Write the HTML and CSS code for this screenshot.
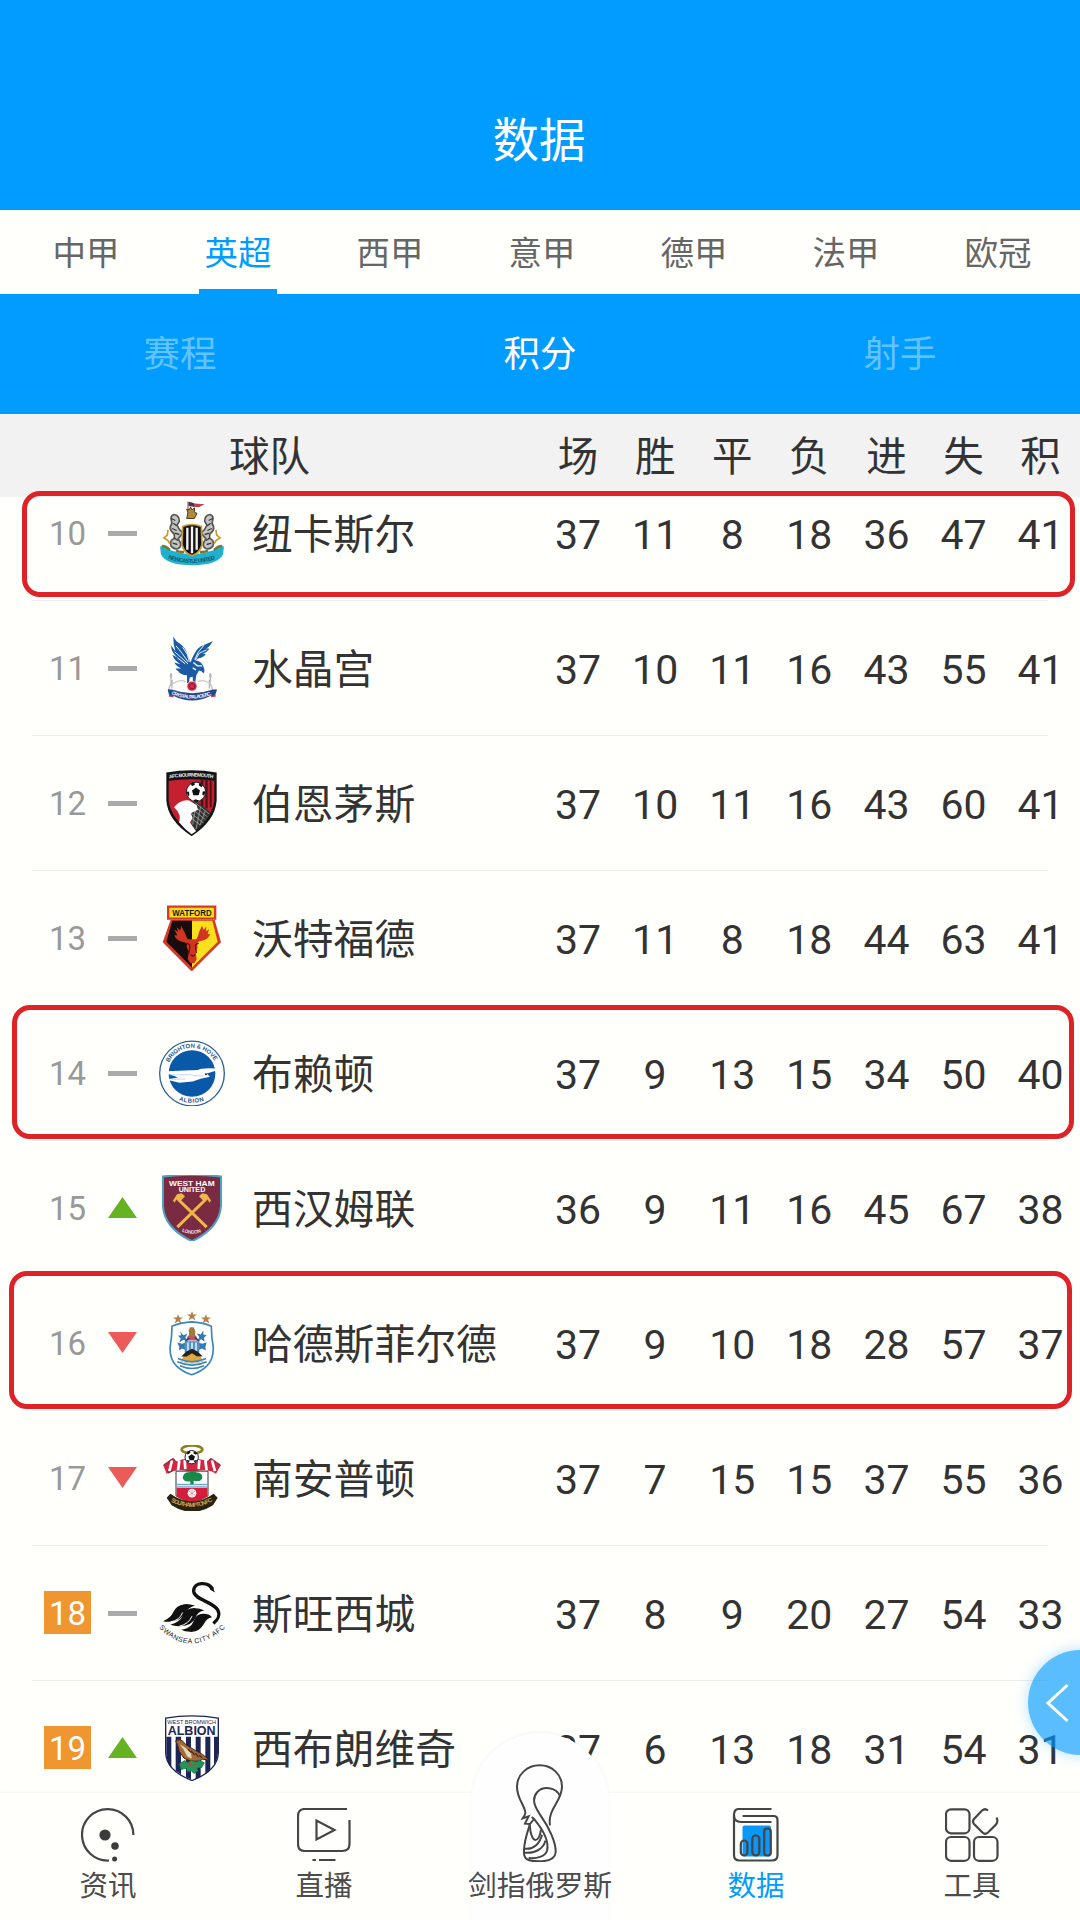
FILE: index.html
```html
<!DOCTYPE html>
<html lang="zh-CN">
<head>
  <meta charset="UTF-8" />
  <meta name="viewport" content="width=device-width, initial-scale=1.0"/>
  <title>数据</title>
  <link rel="stylesheet" href="styles.css">
</head>
<body>
  <!-- club crests -->
  <svg class="defs" width="0" height="0">
    <symbol id="newcastle" viewBox="57 28.5 198 198">
      <path d="M144 34v34" stroke="#555" stroke-width="3"/>
      <path d="M146 34l18 5 30 2-18 9-30-3z" fill="#b5434d"/>
      <path d="M146 34l16 4v10l-16-2z" fill="#3d3a56"/>
      <path d="M140 84l4-18-4-10 8 2 4-8 4 8 8-6-1 12 8 5-8 15z" fill="#b08a3c" stroke="#4a3a22" stroke-width="3"/>
      <path d="M118 92q0-18-16-20-12 4-8 18 4 8-2 16-4 12 6 20 8 6 4 18-14 6-9 22 8 12 22 8 10-6 6-18-4-6-6-12l14-16-10-10-8-14z" fill="#c4c4c4" stroke="#55554f" stroke-width="5"/>
      <path d="M194 92q0-18 16-20 12 4 8 18-4 8 2 16 4 12-6 20-8 6-4 18 14 6 9 22-8 12-22 8-10-6-6-18 4-6 6-12l-14-16 10-10 8-14z" fill="#c4c4c4" stroke="#55554f" stroke-width="5"/>
      <path d="M94 84l12 6M100 98l10 8M96 114l14 6M104 128l14 4M102 142l12 8M98 158l14 4M218 84l-12 6M212 98l-10 8M216 114l-14 6M208 128l-14 4M210 142l-12 8M214 158l-14 4" stroke="#3a3a3a" stroke-width="4"/>
      <path d="M84 118l-2 16-10 8 12 8 6 10M228 118l2 16 10 8-12 8-6 10" fill="none" stroke="#c9962b" stroke-width="5"/>
      <path d="M60 168q12-4 24 8 34 14 72 14t72-14q12-12 24-8l-3 24q-16 32-93 32t-93-32z" fill="#1fb0cd"/>
      <path d="M66 166q12 0 24 12M246 166q-12 0-24 12M108 180q12 6 24 4M204 180q-12 6-24 4" stroke="#7d7428" stroke-width="7" fill="none"/>
      <path d="M128 108q28-12 56 0l2 54q-6 26-30 34-24-8-30-34z" fill="#111" stroke="#c79a35" stroke-width="5"/>
      <path d="M142 112v66M156 108v80M170 112v66" stroke="#f4f4f4" stroke-width="7"/>
      <path id="nufc-line" d="M84 204q70 26 146 0" fill="none"/>
      <text class="crest-text" font-size="17" fill="#14576b" font-weight="bold"><textPath href="#nufc-line" textLength="144">NEWCASTLE UNITED</textPath></text>
    </symbol>

    <symbol id="palace" viewBox="57 433.5 198 198">
      <path d="M100 438q6 14 20 22 16 10 22 32l10 24q6-18 10-24 10-22 28-28l28-12q-8 16-20 22 8-1 10 1-8 12-20 14 6 1 9 2-8 11-22 12l-9 7q18 2 24 18 6 12 1 21-4-8-14-9-6 10-8 14-3 16-3 24h-7l-1-19-9 2-2 17h-6v-24q-20-1-26-12-8-4-8-8l17 0q-16-7-21-18l18 5q-18-10-24-28l16 9q-20-18-20-38l13 18q-7-24-6-42z" fill="#1b5ba6"/>
      <path d="M108 466l18 22 18 26M104 484l20 18 20 18M112 502l24 18M192 464l-18 22-10 22M200 478l-22 10-12 20M128 470l14 22 6 22" stroke="#e9f2fb" stroke-width="3" fill="none"/>
      <path d="M160 516l12 10 14 0M158 532l10 6" stroke="#fff" stroke-width="4" fill="none"/>
      <path d="M86 598q2-10 7-18v-16l-2-8 2-8 2 8-2 8M218 598q-2-10-7-18v-16l2-8-2-8-2 8 2 8M96 594v-26M208 594v-26" fill="none" stroke="#b8b8c0" stroke-width="4"/>
      <path d="M98 580q24-16 38-6M212 580q-24-16-38-6" fill="none" stroke="#ccc" stroke-width="4"/>
      <circle cx="156" cy="587" r="15" fill="#d02c4a" stroke="#eee" stroke-width="2"/>
      <path d="M147 584l9-6 10 6-4 10h-11z" fill="none" stroke="#8c1730" stroke-width="3"/>
      <path d="M84 597q10-1 20 6l-4 17-14-2 4-9zM230 597q-10-1-20 6l4 17 14-2-4-9z" fill="#c4314b"/>
      <path d="M83 598l12-1q62 22 124 0l12 1-5 15-12 2q-57 30-116 0l-11-2z" fill="#24478f"/>
      <path id="cpfc-line" d="M94 611q62 26 126 0" fill="none"/>
      <text class="crest-text" font-size="15" fill="#fff" font-weight="bold"><textPath href="#cpfc-line" textLength="124">CRYSTAL PALACE F.C.</textPath></text>
    </symbol>

    <symbol id="bournemouth" viewBox="57 58.5 198 198">
      <path d="M79 66q76-14 151 0v84q-4 60-75 107-72-47-76-107z" fill="#141414"/>
      <path d="M86 91q68-10 137 0v58q-6 54-68 98-64-44-69-98z" fill="#c4202f"/>
      <path d="M182 88h8v90h-8zM196 88h7v86h-7zM209 90h6v80h-6z" fill="#4a1219"/>
      <path d="M150 160l20-8 42 34q-20 40-57 64l-8-8 10-30z" fill="#333"/>
      <path d="M160 165l42 34M156 175l40 32M152 187l38 30M154 203l26 20M166 157l42 34M168 162l-10 60M182 168l-14 68M196 180l-16 44" stroke="#bbb" stroke-width="2"/>
      <path d="M102 170q20-24 46-20l22 14 4 14-22 10 6 14-8 14 18 26-13 9q-22-16-38-36 4-6 2-20-4-14-17-25z" fill="#fff"/>
      <circle cx="168" cy="124" r="29" fill="#fff" stroke="#222" stroke-width="3"/>
      <path d="M168 111l12 9-4 14h-16l-4-14zM152 99l10-4 3 7-9 5zM178 97l11 7-4 6-9-6zM196 122l-3 14-6-3 1-10zM140 123l7 1 1 10-4 4zM160 151l6-5 11 4-5 4z" fill="#111"/>
      <path id="afcb-line" d="M88 84q67-12 134 0" fill="none"/>
      <text class="crest-text" font-size="15" fill="#eee" font-weight="bold"><textPath href="#afcb-line" textLength="132">AFC BOURNEMOUTH</textPath></text>
    </symbol>

    <symbol id="watford" viewBox="57 463.5 198 198">
      <path d="M92 508h132l19 67-88 88-87-88z" fill="#d23a2a"/>
      <path d="M97 511h59v140l-77-77z" fill="#160d0c"/>
      <path d="M156 511h61l16 63-77 77z" fill="#f8e11c"/>
      <path d="M103 538l11 6-4-14 11 10 2-14 9 16 6 14 5 10h26l5-10 4-14 8-16 5 12 8-10-1 14 9-6-4 16 8-2q-6 18-24 20l-12 4-4 6 2 10-6 14 3 22-7 12h-12l-8-12 4-22-7-14 1-10-6-4-14-4q-14-6-18-18l9 0z" fill="#d2351f"/>
      <path d="M140 578l10 5M176 578l-10 5M150 584l-3 24M166 584l3 24M151 612l7 5 7-5" stroke="#65160e" stroke-width="4" fill="none"/>
      <path d="M81 465h148v43H81z" fill="#d23a2a"/>
      <path d="M88 472h134v29H88z" fill="#fbdc1d"/>
      <text class="crest-text" x="97" y="496" font-size="25" textLength="118" lengthAdjust="spacingAndGlyphs" fill="#161616" font-weight="bold">WATFORD</text>
    </symbol>

    <symbol id="brighton" viewBox="57 58.5 198 198">
      <circle cx="156" cy="159" r="97" fill="#fff" stroke="#2e6095" stroke-width="4"/>
      <circle cx="156" cy="159" r="70" fill="#0a58a8"/>
      <path d="M66 153l84-4q20 2 34-4 30-4 56 2l-40 12 10 10-28 6-24 8-40 4-40-10 36-6z" fill="#fff"/>
      <path d="M88 163h42q20-2 30 2l32 2M94 176h42" stroke="#a9c4de" stroke-width="2" fill="none"/>
      <circle cx="198" cy="161" r="3" fill="#123"/>
      <path id="bha-top" d="M87 126A76 76 0 0 1 225 126" fill="none"/>
      <path id="bha-bottom" d="M116 239q40 16 80 0" fill="none"/>
      <text class="crest-text" font-size="18" fill="#1d5690" font-weight="bold"><textPath href="#bha-top" textLength="168">BRIGHTON &amp; HOVE</textPath></text>
      <text class="crest-text" font-size="18" fill="#1d5690" font-weight="bold"><textPath href="#bha-bottom" textLength="78">ALBION</textPath></text>
    </symbol>

    <symbol id="westham" viewBox="57 463.5 198 198">
      <path d="M69 468q87-10 174 0v88q-4 66-87 106-84-40-87-106z" fill="#7b2b41" stroke="#4f9fc0" stroke-width="6"/>
      <path d="M112 534l88 86M200 534l-88 86" stroke="#eeb74a" stroke-width="9"/>
      <path d="M99 540l12-19 14-3 10 9-12 13-12-5-8 12zM213 540l-12-19-14-3-10 9 12 13 12-5 8 12z" fill="#eeb74a"/>
      <text class="crest-text" x="87" y="496" font-size="23" textLength="137" lengthAdjust="spacingAndGlyphs" fill="#fff" font-weight="bold">WEST HAM</text>
      <text class="crest-text" x="116" y="513" font-size="19" textLength="80" lengthAdjust="spacingAndGlyphs" fill="#fff" font-weight="bold">UNITED</text>
      <path id="whu-line" d="M125 633q31 14 62 0" fill="none"/>
      <text class="crest-text" font-size="15" fill="#f0dfe3" font-weight="bold"><textPath href="#whu-line" textLength="60">LONDON</textPath></text>
    </symbol>

    <symbol id="huddersfield" viewBox="57 58.5 198 198">
      <g fill="#b08048">
        <path d="M156 62l4 10 11 0-9 7 4 11-10-7-10 7 4-11-9-7 11 0z"/>
        <path d="M114 71l4 10 11 0-9 7 4 11-10-7-10 7 4-11-9-7 11 0z"/>
        <path d="M198 71l4 10 11 0-9 7 4 11-10-7-10 7 4-11-9-7 11 0z"/>
      </g>
      <path d="M96 107q30-12 59-13 30 1 59 13 0 34 6 64 0 38-20 56-16 16-45 26-29-10-45-26-20-18-20-56 6-30 6-64z" fill="#fff" stroke="#3b86bd" stroke-width="5"/>
      <path d="M120 122l10 12 12-4-6 12 8 10-14-4-12 8 4-12-8-8 10-2zM190 120l-8 12-12-4 8 12-6 12 12-6 10 8-2-12 8-8-10-2zM112 156l14 4 12-4-4 12 6 12-14-6-10 6 2-10zM200 156l-14 4-12-4 4 12-6 12 14-6 12 6-2-10z" fill="#3579b0"/>
      <path d="M134 152h44v34h-44z" fill="#4f94c8"/>
      <path d="M144 156v26M156 156v26M168 156v26" stroke="#fff" stroke-width="4"/>
      <path d="M148 140l-2-20 4-10h11l5 12-2 18z" fill="#a37c33"/>
      <path d="M144 135h24l6 15h-36z" fill="#b85a6d"/>
      <path d="M136 152l12-10M178 152l-14-12" stroke="#22405c" stroke-width="4"/>
      <path d="M132 196q24-24 48 0l11 17q-36 12-70 0z" fill="#e1a83d"/>
      <path d="M124 198l14-14 18-9 18 9 14 14-18-1-14-9-16 10z" fill="#242124"/>
      <path d="M114 204q42 20 84 0M112 214q44 20 88 0M120 226q36 16 72 0" fill="none" stroke="#3e84b4" stroke-width="5"/>
      <path d="M124 211q32 14 64 0" fill="none" stroke="#bdd9ea" stroke-width="3"/>
    </symbol>

    <symbol id="southampton" viewBox="57 463.5 198 198">
      <ellipse cx="156" cy="477" rx="31" ry="12" fill="none" stroke="#8c8020" stroke-width="8"/>
      <path d="M70 524l28-20 14 9q20-10 32-6l12 6 14-6q16-2 30 6l12-9 30 20-14 26-14-8q-24-6-48 0h-20q-24-6-48 0l-18 8z" fill="#d22541"/>
      <path d="M96 510l-8 32M118 510l-4 30M134 509l2 27M178 509l-2 27M196 510l4 30M216 510l9 32" stroke="#fff" stroke-width="8"/>
      <path d="M70 524l28-20 6 3M84 548l14-7M242 524l-28-20-6 3" fill="none" stroke="#722032" stroke-width="3"/>
      <path d="M108 542h96v74q-48 34-96 0z" fill="#fff" stroke="#3d3035" stroke-width="3"/>
      <path d="M110 592h92v26q-46 30-92 0z" fill="#d41e3c"/>
      <path d="M110 582h92M110 589h92" stroke="#71a8d6" stroke-width="4"/>
      <path d="M128 562q2-17 18-17 14-6 24 1 16 0 17 14-2 13-18 12l-8-1v10h-10v-9q-18 5-23-10z" fill="#18884b"/>
      <circle cx="155" cy="500" r="20" fill="#fff" stroke="#222" stroke-width="3"/>
      <path d="M155 491l10 7-4 11h-12l-4-11zM140 486l9-5 2 6-8 6zM162 482l10 6-4 5-8-5zM172 508l-7 8-5-5zM138 508l7 8 5-5z" fill="#111"/>
      <circle cx="156" cy="608" r="13" fill="#fff"/>
      <path d="M156 597v22M146 601l20 14M166 601l-20 14" stroke="#e5a2ab" stroke-width="3"/>
      <path d="M80 622l11-12q65 46 130 0l12 12-14 22q-63 40-124 0z" fill="#292310"/>
      <path id="sfc-line" d="M92 633q64 34 130 -3" fill="none"/>
      <text class="crest-text" font-size="18" fill="#c9a956" font-weight="bold"><textPath href="#sfc-line" textLength="132">SOUTHAMPTON FC</textPath></text>
    </symbol>

    <symbol id="swansea" viewBox="57 58.5 198 198">
      <path d="M218 86C204 62 160 64 161 92C163 118 216 122 233 148C241 162 234 178 220 189" fill="none" stroke="#111" stroke-width="10"/>
      <path d="M204 72q16 4 21 24l-14-8z" fill="#111"/>
      <path d="M69 182q24-10 30-26 10-22 34-25 12-2 32 4-20 6-29 22-12 24-44 26-10 2-23-1z" fill="#111"/>
      <path d="M91 193q28-8 38-28 10-24 38-22 12 0 26 7-20 3-26 21-12 26-46 26-16 1-30-4z" fill="#111"/>
      <path d="M124 208q28-4 36-24 8-26 32-24 14 0 24 10-16 2-24 20-14 26-42 24-16 0-26-6z" fill="#111"/>
      <path d="M92 184q26-4 36-28M118 197q28-6 38-30" stroke="#fffffc" stroke-width="3" fill="none"/>
      <path id="swans-line" d="M57 202Q154 298 260 198" fill="none"/>
      <text class="crest-text" font-size="21" fill="#222"><textPath href="#swans-line" textLength="226">SWANSEA CITY AFC</textPath></text>
    </symbol>

    <symbol id="westbrom" viewBox="57 463.5 198 198">
      <path d="M77 473q78-14 158 0v104q-2 54-79 83-77-29-79-83z" fill="#fff" stroke="#1d2456" stroke-width="4"/>
      <path d="M79 529h15v94q-15-18-15-46zM107 529h16v112l-16-10zM138 529h15v127l-15-6zM167 529h15v121l-15 6zM196 529h15v98l-15 14zM222 529h12v48q-2 22-12 36z" fill="#1d2456"/>
      <path d="M107 541q10-8 20 0l11 12 28 17 22 12 20 17-20-3-10 6h-26l-20-9-14-20-5-18z" fill="#a36b3b" stroke="#3f2515" stroke-width="3"/>
      <path d="M119 551l12 16 10 20 14 8-2-18-18-16z" fill="#ead7ae"/>
      <path d="M144 566l10 10M154 572l10 12M166 578l10 12M178 584l8 8" stroke="#4b2815" stroke-width="4"/>
      <path d="M118 610l16-10 8 6 12-7 12 7 12-7 15 8-8 14-14 2 4 8-13 8-8-8-12 4-3-12-16 4z" fill="#249558" stroke="#0e6238" stroke-width="2"/>
      <circle cx="150" cy="611" r="5" fill="#cf3f36"/><circle cx="162" cy="615" r="4" fill="#cf3f36"/>
      <text class="crest-text" x="82" y="491" font-size="17" textLength="146" lengthAdjust="spacingAndGlyphs" fill="#1d2456">WEST BROMWICH</text>
      <text class="crest-text" x="83" y="524" font-size="38" textLength="144" lengthAdjust="spacingAndGlyphs" fill="#1d2456" font-weight="bold">ALBION</text>
    </symbol>
  </svg>

  <div class="app">
    <header class="title-bar">数据</header>

    <nav class="league-tabs">
      <a class="league">中甲</a>
      <a class="league active">英超</a>
      <a class="league">西甲</a>
      <a class="league">意甲</a>
      <a class="league">德甲</a>
      <a class="league">法甲</a>
      <a class="league">欧冠</a>
    </nav>

    <nav class="sub-tabs">
      <a class="sub">赛程</a>
      <a class="sub active">积分</a>
      <a class="sub">射手</a>
    </nav>

    <div class="table-head">
      <span class="team-col">球队</span>
      <span>场</span><span>胜</span><span>平</span><span>负</span><span>进</span><span>失</span><span>积</span>
    </div>

    <main class="standings" id="standings"></main>

    <nav class="bottom-nav">
      <a class="nav-item">
        <svg class="nav-icon" viewBox="0 0 54 54">
          <path d="M52.4 27A25.7 25.7 0 1 0 28 52.5" class="line"/>
          <circle cx="24" cy="27" r="5.6"/><circle cx="34" cy="38" r="3.8"/><circle cx="33.6" cy="51" r="2.5"/>
        </svg>
        <span>资讯</span>
      </a>
      <a class="nav-item">
        <svg class="nav-icon" viewBox="0 0 54 54">
          <path d="M50 1H8Q1 1 1 8V36Q1 43 8 43H45Q52.500 43 52.500 36V12" class="line"/>
          <path d="M19.500 12.500V31.500L37.500 22Z" class="line"/>
          <path d="M15.500 52H19M22 52H38.500" class="line"/>
        </svg>
        <span>直播</span>
      </a>
      <a class="nav-item center">
        <svg class="trophy" viewBox="168 114 144 294">
          <path d="M196 264C198 240 171 222 171 182C171 145 202 118 239 118C276 118 306 145 306 182C306 226 262 250 270 298"/>
          <path d="M300 210C288 182 248 180 232 198C212 220 226 246 244 272C268 306 288 350 287 378C286 398 264 406 236 406C202 406 190 400 192 372C194 334 206 312 209 296"/>
          <path d="M196 264L188 277L206 271L195 293L210 294L222 279L215 273"/>
          <path d="M209 296C211 318 216 341 226 342C236 342 241 324 243 311"/>
          <path d="M223 280C248 310 268 346 261 374C256 392 230 398 206 396"/>
          <path d="M194 368C220 372 240 352 246 326"/>
          <path d="M192 380C230 384 252 364 256 344"/>
        </svg>
        <span>剑指俄罗斯</span>
      </a>
      <a class="nav-item active">
        <svg class="nav-icon" viewBox="0 0 54 54">
          <rect x="13.500" y="17.500" width="28.500" height="31" rx="2" class="fill"/>
          <path d="M42.500 1H10Q5 1 5 7V47Q5 52.500 10.500 52.500H43Q48.500 52.500 48.500 47V12Q48.500 8 44.500 8H13.500M5 7Q5 14 12 14H42.500" class="line"/>
          <rect x="11.800" y="32.500" width="6.600" height="15" rx="3.300" class="line"/>
          <rect x="23.300" y="27.500" width="7" height="20" rx="3.500" class="line"/>
          <rect x="35.200" y="20.500" width="6.600" height="27" rx="3" class="line"/>
        </svg>
        <span>数据</span>
      </a>
      <a class="nav-item">
        <svg class="nav-icon" viewBox="0 0 54 54">
          <rect x="1" y="1.300" width="23.500" height="24" rx="5" class="line"/>
          <rect x="1" y="29" width="23.500" height="23.800" rx="5" class="line"/>
          <rect x="29" y="29" width="23.500" height="23.800" rx="5" class="line"/>
          <path d="M43 2.500Q40 0 37 2.500L29 11Q27 13.500 29 16L37.500 24.500Q40 27 43 24.500L51 16.500Q53.500 13 51.500 9.500" class="line"/>
        </svg>
        <span>工具</span>
      </a>
    </nav>

    <button class="side-btn">
      <svg viewBox="0 0 24 42"><path d="M21.500 3L2 21L21.500 39"/></svg>
    </button>

    <div class="mark mark-newcastle"></div>
    <div class="mark mark-brighton"></div>
    <div class="mark mark-huddersfield"></div>
  </div>

  <script>
    // rank, trend, crest, name, [场, 胜, 平, 负, 进, 失, 积]
    const teams = [
      [10, 'same', 'newcastle', '纽卡斯尔', [37, 11, 8, 18, 36, 47, 41]],
      [11, 'same', 'palace', '水晶宫', [37, 10, 11, 16, 43, 55, 41]],
      [12, 'same', 'bournemouth', '伯恩茅斯', [37, 10, 11, 16, 43, 60, 41]],
      [13, 'same', 'watford', '沃特福德', [37, 11, 8, 18, 44, 63, 41]],
      [14, 'same', 'brighton', '布赖顿', [37, 9, 13, 15, 34, 50, 40]],
      [15, 'up', 'westham', '西汉姆联', [36, 9, 11, 16, 45, 67, 38]],
      [16, 'down', 'huddersfield', '哈德斯菲尔德', [37, 9, 10, 18, 28, 57, 37]],
      [17, 'down', 'southampton', '南安普顿', [37, 7, 15, 15, 37, 55, 36]],
      [18, 'same', 'swansea', '斯旺西城', [37, 8, 9, 20, 27, 54, 33]],
      [19, 'up', 'westbrom', '西布朗维奇', [37, 6, 13, 18, 31, 54, 31]]
    ];

    document.getElementById('standings').innerHTML = teams.map(([rank, trend, crest, name, stats]) => `
      <div class="row">
        <span class="rank${rank >= 18 ? ' relegation' : ''}">${rank}</span>
        <i class="trend ${trend}"></i>
        <svg class="crest"><use href="#${crest}"/></svg>
        <span class="name">${name}</span>
        ${stats.map(n => `<span class="stat">${n}</span>`).join('')}
      </div>`).join('');
  </script>
</body>
</html>
```

FILE: styles.css
```css
* {
  box-sizing: border-box;
}
body {
  margin: 0;
  background: #fffffc;
  color: #333;
  font-family: "Noto Sans CJK SC", sans-serif;
}
.defs {
  display: none;
}
.crest-text {
  font-family: "Liberation Sans", Arial, sans-serif;
}
.app {
  position: relative;
  display: flex;
  flex-direction: column;
  width: 1080px;
  height: 1920px;
  overflow: hidden;
}

/* header */
.title-bar {
  flex: none;
  height: 210px;
  padding: 67px 2px 0 0;
  background: #009cff;
  color: #fff;
  font-size: 46.5px;
  line-height: 140px;
  text-align: center;
}
.league-tabs {
  flex: none;
  display: flex;
  height: 84px;
  padding-left: 10px;
}
.league {
  flex: none;
  display: flex;
  flex-direction: column;
  align-items: center;
  width: 152px;
  color: #666;
  font-size: 33.5px;
  line-height: 82px;
}
.league.active {
  color: #009cff;
}
.league.active::after {
  content: "";
  width: 78px;
  height: 5px;
  margin-top: -3px;
  background: #009cff;
}
.sub-tabs {
  flex: none;
  display: flex;
  height: 120px;
  background: #009cff;
}
.sub {
  flex: 1;
  color: #62c4ff;
  font-size: 36.5px;
  line-height: 116px;
  text-align: center;
}
.sub.active {
  color: #fff;
}

/* table */
.table-head,
.row {
  display: grid;
  grid-template-columns: 64px 51px 93px 287.5px repeat(7, 77.1px);
  align-items: center;
  padding-left: 44px;
}
.table-head {
  flex: none;
  position: relative;
  z-index: 1;
  height: 83px;
  background: #f2f2f3;
  font-size: 40.5px;
  line-height: 80px;
  text-align: center;
}
.table-head span {
  height: 83px;
}
.team-col {
  grid-column: span 4;
  padding-left: 185px;
  text-align: left;
}
.standings {
  flex: 1;
  min-height: 0;
  margin-top: -32px;
  overflow: hidden;
}
.row {
  height: 135px;
  background: linear-gradient(#ededeb, #ededeb) 32px 0 / 1016px 1px no-repeat;
}
.rank {
  width: 47px;
  height: 43px;
  color: #999;
  font: 33px/45px Roboto, sans-serif;
  text-align: center;
}
.rank.relegation {
  background: #ef9631;
  color: #fff;
}
.trend {
  width: 29px;
}
.trend.same {
  height: 5px;
  margin-top: 1px;
  background: #aaa;
}
.trend.up,
.trend.down {
  height: 21px;
  background: #65b223;
  clip-path: polygon(50% 0, 100% 100%, 0 100%);
}
.trend.down {
  background: #ec5a5a;
  clip-path: polygon(0 0, 100% 0, 50% 100%);
}
.crest {
  width: 66px;
  height: 66px;
}
.name {
  height: 62px;
  font-size: 40.8px;
  line-height: 60px;
  white-space: nowrap;
}
.stat {
  padding-top: 5px;
  font: 41px/48px Roboto, sans-serif;
  text-align: center;
}

/* bottom navigation */
.bottom-nav {
  flex: none;
  position: relative;
  display: flex;
  height: 127px;
  background: #fffffc;
  box-shadow: 0 0 3px rgba(0, 0, 0, 0.1);
}
.nav-item {
  flex: 1;
  position: relative;
  display: flex;
  flex-direction: column;
  align-items: center;
  padding-top: 15px;
  color: #4c4c4c;
  font-size: 28.5px;
  line-height: 42px;
}
.nav-item.active {
  color: #009cff;
}
.nav-icon {
  width: 54px;
  height: 54px;
  margin-bottom: 1px;
  fill: #3c3c3c;
}
.line {
  fill: none;
  stroke: #454545;
  stroke-width: 2.2;
}
.nav-icon .fill {
  fill: #0a97f5;
}
.center::before {
  content: "";
  position: absolute;
  top: -60px;
  left: 39px;
  width: 138px;
  height: 187px;
  border-radius: 69px 69px 0 0;
  background: #fefeff;
  box-shadow: 0 -1px 3px rgba(0, 0, 0, 0.05);
}
.center svg,
.center span {
  position: relative;
}
.center span {
  font-size: 28.8px;
}
.trophy {
  flex: none;
  width: 48px;
  height: 98px;
  margin: -44px 0 1px;
  fill: none;
  stroke: #454545;
  stroke-width: 6;
}

/* floating handle on the right edge */
.side-btn {
  position: absolute;
  top: 1650px;
  right: -53px;
  width: 105px;
  height: 105px;
  padding: 0 0 0 18px;
  border: none;
  border-radius: 50%;
  background: rgba(0, 153, 255, 0.65);
  box-shadow: 0 0 14px rgba(0, 153, 255, 0.3);
  text-align: left;
}
.side-btn svg {
  display: block;
  width: 24px;
  height: 42px;
  fill: none;
  stroke: #fff;
  stroke-width: 3;
}

/* hand-drawn highlights around single teams */
.mark {
  position: absolute;
  z-index: 2;
  border: 5px solid #dd2228;
  border-radius: 18px;
}
.mark-newcastle {
  top: 491px;
  left: 22px;
  width: 1053px;
  height: 106px;
}
.mark-brighton {
  top: 1005px;
  left: 12px;
  width: 1062px;
  height: 134px;
}
.mark-huddersfield {
  top: 1271px;
  left: 9px;
  width: 1063px;
  height: 138px;
}
```
